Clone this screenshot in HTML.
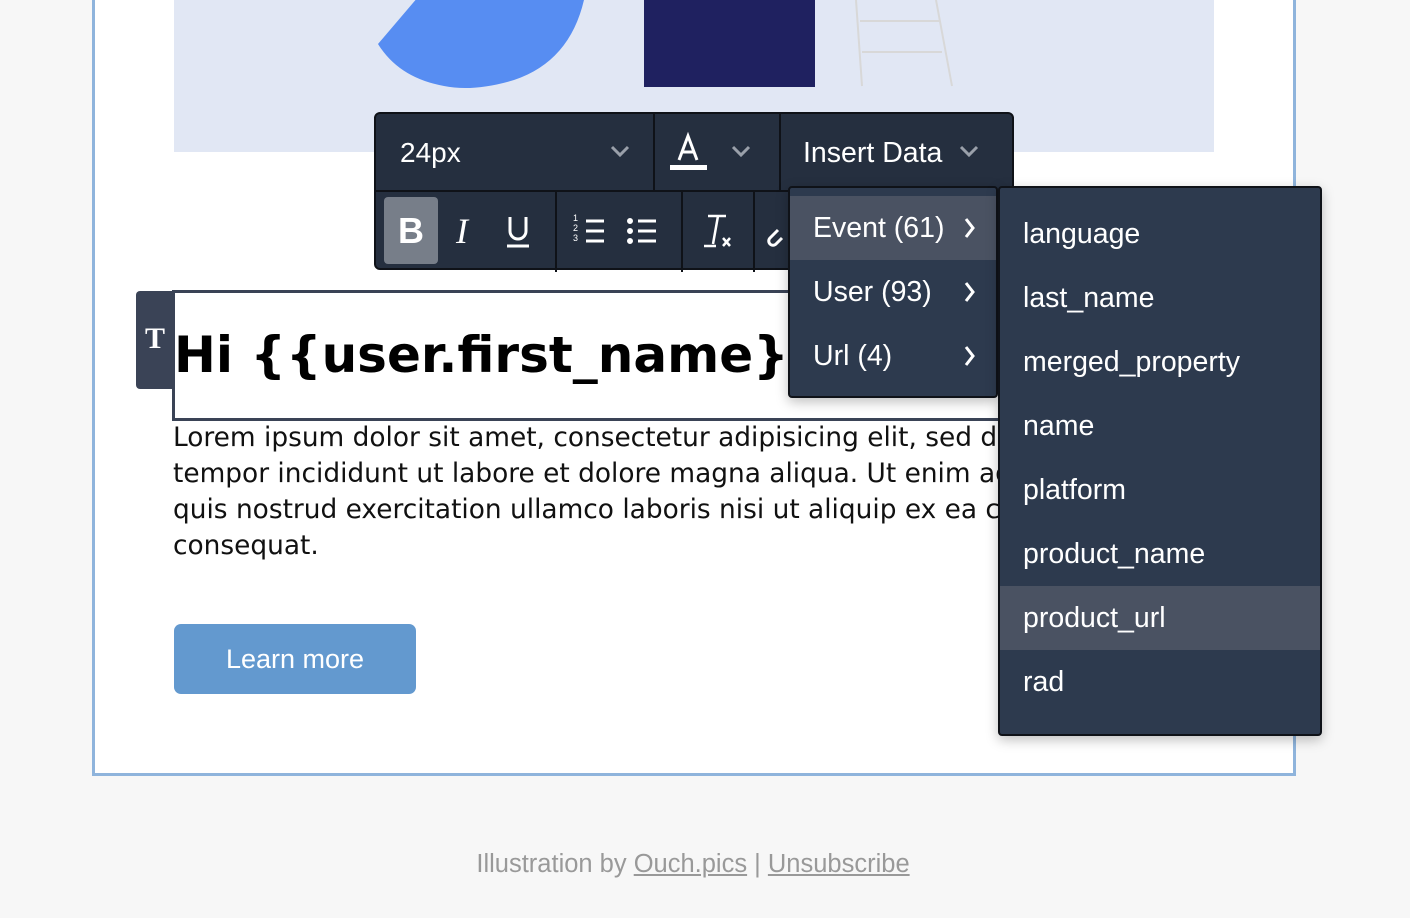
<!DOCTYPE html>
<html><head><style>
*{margin:0;padding:0;box-sizing:border-box}
body{width:1410px;height:918px;background:#f7f7f7;position:relative;overflow:hidden;font-family:"Liberation Sans",sans-serif}
.abs{position:absolute}
.card{left:92px;top:-10px;width:1204px;height:786px;border:3px solid #8fb4dc;background:#fff}
.img{left:174px;top:0;width:1040px;height:152px;background:#e1e7f4;overflow:hidden}
.tb{left:374px;top:112px;width:640px;height:158px;background:#252f3f;border:2px solid #0f1218;border-radius:6px}
.w{color:#fff}
.menu{background:#2d3a4e;border:2px solid #0f1218;border-radius:4px;box-shadow:0 4px 12px rgba(0,0,0,.25)}
.it{position:absolute;left:0;right:0;height:64px;line-height:64px;color:#fff;font-size:28.5px;padding-left:23px}
.hl{background:#4a5262}
.par{left:173px;top:420px;font-family:"DejaVu Sans",sans-serif;font-size:26.4px;line-height:36px;color:#111;white-space:nowrap}
</style></head><body>
<div class="abs card"></div>
<div class="abs img">
<svg width="1040" height="152" style="position:absolute;left:0;top:0">
<path d="M204 44 L250 -10 L412 -10 Q400 60 340 80 Q300 92 270 86 Q225 78 204 44Z" fill="#578df2"/>
<rect x="470" y="-2" width="171" height="89" fill="#1f2160"/>
<g stroke="#d8d8d8" stroke-width="2" fill="none"><path d="M682 0 L688 86 M762 0 L778 86 M686 21 L765 21 M688 52 L768 52"/></g>
</svg>
</div>
<div class="abs" style="left:136px;top:291px;width:42px;height:98px;background:#3a4356;border-radius:4px 0 0 4px"></div>
<div class="abs" style="left:145px;top:322px;color:#fff;font-family:'Liberation Serif',serif;font-weight:bold;font-size:30px">T</div>
<div class="abs" style="left:172px;top:290px;width:840px;height:131px;border:3px solid #3a4356;background:#fff"></div>
<div class="abs" style="left:174px;top:326px;font-size:50px;font-weight:bold;color:#000;white-space:nowrap;font-family:'DejaVu Sans','Liberation Sans',sans-serif;letter-spacing:0px">Hi {{user.first_name}}</div>
<div class="abs par">Lorem ipsum dolor sit amet, consectetur adipisicing elit, sed do<br>tempor incididunt ut labore et dolore magna aliqua. Ut enim ad<br>quis nostrud exercitation ullamco laboris nisi ut aliquip ex ea co<br>consequat.</div>
<div class="abs" style="left:174px;top:624px;width:242px;height:70px;background:#6399cf;border-radius:7px;color:#fff;font-size:27px;text-align:center;line-height:70px">Learn more</div>
<div class="abs" style="left:0;width:1386px;top:850px;text-align:center;color:#999;font-size:25.5px">Illustration by <u>Ouch.pics</u> | <u>Unsubscribe</u></div>
<div class="abs tb">
<div class="abs" style="left:0;top:76px;width:636px;height:2px;background:#0f1218"></div>
<div class="abs" style="left:277px;top:0;width:2px;height:76px;background:#0f1218"></div>
<div class="abs" style="left:403px;top:0;width:2px;height:76px;background:#0f1218"></div>
<div class="abs" style="left:179px;top:78px;width:2px;height:80px;background:#0f1218"></div>
<div class="abs" style="left:305px;top:78px;width:2px;height:80px;background:#0f1218"></div>
<div class="abs" style="left:377px;top:78px;width:2px;height:80px;background:#0f1218"></div>
<div class="abs w" style="left:24px;top:23px;font-size:28px">24px</div>
<div class="abs w" style="left:427px;top:23px;font-size:28.5px">Insert Data</div>
<svg class="abs" style="left:0;top:0" width="640" height="158" fill="none" stroke="#9aa0aa" stroke-width="3">
<path d="M236 33 l8 8 l8 -8 M357 33 l8 8 l8 -8 M585 33 l8 8 l8 -8"/>
<path d="M303 46 L312 22 L321 46 M306 38 L318 38" stroke="#fff" stroke-width="3"/>
<rect x="294" y="51" width="37" height="5" fill="#fff" stroke="none"/>
</svg>
<div class="abs" style="left:8px;top:83px;width:54px;height:67px;background:#777e89;border-radius:4px"></div>
<div class="abs w" style="left:22px;top:96px;font-size:36px;font-weight:bold">B</div>
<div class="abs w" style="left:80px;top:96px;font-size:36px;font-family:'Liberation Serif',serif;font-style:italic">I</div>
<svg class="abs" style="left:0;top:0" width="640" height="158" fill="none" stroke="#fff" stroke-width="3">
<path d="M134 103 v14 a8 8 0 0 0 16 0 v-14 M131 132 h22"/>
<path d="M210 107 h18 M210 117 h18 M210 127 h18 M262 107 h18 M262 117 h18 M262 127 h18"/>
<circle cx="254" cy="107" r="1.5" fill="#fff"/><circle cx="254" cy="117" r="1.5" fill="#fff"/><circle cx="254" cy="127" r="1.5" fill="#fff"/>
<path d="M332 102 h18 M342 102 l-5 28 M328 132 h12 M347 124 l7 8 M354 124 l-7 8" stroke-width="2.5"/>
<path d="M402 116 l-8 8 a4 4 0 0 0 6 6 l6 -6"/>
</svg>
<div class="abs w" style="left:197px;top:99px;font-size:9px;line-height:10px">1<br>2<br>3</div>
</div>
<div class="abs menu" style="left:788px;top:186px;width:210px;height:212px">
<div class="it hl" style="top:8px">Event (61)</div>
<div class="it" style="top:72px">User (93)</div>
<div class="it" style="top:136px">Url (4)</div>
<svg class="abs" style="left:0;top:0" width="210" height="212" fill="none" stroke="#fff" stroke-width="3"><path d="M176 31 l7 9 l-7 9 M176 95 l7 9 l-7 9 M176 159 l7 9 l-7 9"/></svg>
</div>
<div class="abs menu" style="left:998px;top:186px;width:324px;height:550px">
<div class="it" style="top:14px">language</div>
<div class="it" style="top:78px">last_name</div>
<div class="it" style="top:142px">merged_property</div>
<div class="it" style="top:206px">name</div>
<div class="it" style="top:270px">platform</div>
<div class="it" style="top:334px">product_name</div>
<div class="it hl" style="top:398px">product_url</div>
<div class="it" style="top:462px">rad</div>
</div>
</body></html>
